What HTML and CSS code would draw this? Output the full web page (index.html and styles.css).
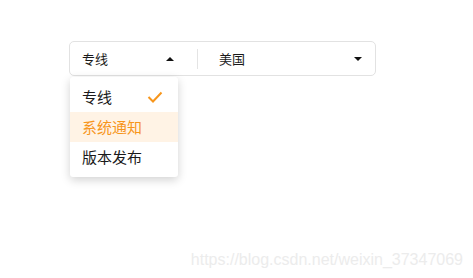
FILE: index.html
```html
<!DOCTYPE html>
<html lang="zh-CN">
<head>
    <meta charset="UTF-8">
    <title>筛选</title>
    <link rel="stylesheet" href="styles.css">
</head>
<body>
    <div class="page">
        <!-- Filter bar -->
        <div class="filter-bar">
            <div class="filter-item open">
                <span class="label">专线</span>
                <span class="caret up"></span>

                <!-- Dropdown menu -->
                <ul class="menu">
                    <li class="selected">专线
                        <svg class="check" width="16" height="12" viewBox="0 0 16 12">
                            <path d="M1.5 6 L6 10.5 L14.5 1.5" fill="none" stroke="#f7961c" stroke-width="2"/>
                        </svg>
                    </li>
                    <li class="hover">系统通知</li>
                    <li>版本发布</li>
                </ul>
            </div>
            <div class="divider"></div>
            <div class="filter-item">
                <span class="label">美国</span>
                <span class="caret down"></span>
            </div>
        </div>
    </div>

    <div class="watermark">https://blog.csdn.net/weixin_37347069</div>
</body>
</html>
```

FILE: styles.css
```css
* {
    margin: 0;
    padding: 0;
    box-sizing: border-box;
}

body {
    background: #fff;
    color: #222;
    font-family: "Noto Sans CJK SC", "Liberation Sans", sans-serif;
    width: 473px;
    height: 278px;
    overflow: hidden;
    position: relative;
}

.page {
    padding: 41px 0 0 69px;
}

/* Filter bar */
.filter-bar {
    width: 307px;
    height: 35px;
    border: 1px solid #e2e2e2;
    border-radius: 5px;
    display: flex;
    align-items: center;
}

.filter-item {
    position: relative;
    display: flex;
    align-items: center;
    height: 100%;
    padding: 0 0 0 12px;
}

.filter-item:first-child {
    width: 127px;
    padding-right: 23px;
}

.filter-item:last-child {
    flex: 1;
    padding-left: 21px;
    padding-right: 13px;
}

.label {
    flex: 1;
    font-size: 13px;
    color: #1a1a1a;
}

.caret {
    width: 0;
    height: 0;
    border-left: 4px solid transparent;
    border-right: 4px solid transparent;
}

.caret.up {
    border-bottom: 4px solid #111;
}

.caret.down {
    border-top: 4px solid #111;
}

.divider {
    width: 1px;
    height: 20px;
    background: #e4e4e4;
}

/* Dropdown */
.menu {
    position: absolute;
    top: 35px;
    left: 0;
    width: 108px;
    padding: 5px 0;
    list-style: none;
    background: #fff;
    border-radius: 3px;
    box-shadow: 0 3px 10px rgba(0, 0, 0, 0.18);
}

.menu li {
    height: 30px;
    line-height: 30px;
    padding: 0 12px;
    font-size: 15px;
    color: #1a1a1a;
    display: flex;
    align-items: center;
    justify-content: space-between;
}

.menu li.hover {
    background: #fff3e5;
    color: #f7961c;
}

.check {
    margin-right: 3px;
}

.watermark {
    position: absolute;
    right: 10px;
    bottom: 9px;
    font-family: "Liberation Sans", Arial, sans-serif;
    font-size: 16px;
    color: #ececec;
}
```
